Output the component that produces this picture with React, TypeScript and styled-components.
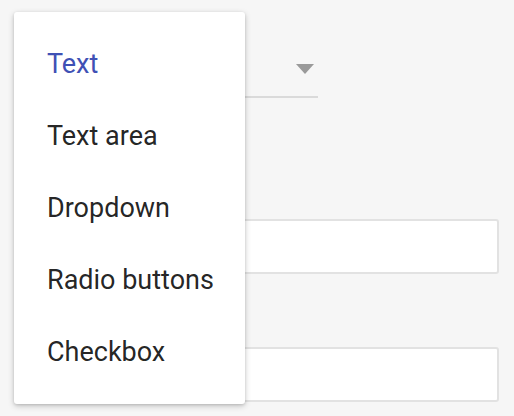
import React from "react";
import styled, { createGlobalStyle } from "styled-components";

const Global = createGlobalStyle`
  html, body {
    margin: 0;
    padding: 0;
    background: #f6f6f6;
    font-family: Roboto, "Noto Sans", "Liberation Sans", sans-serif;
  }
`;

const Page = styled.div`
  position: relative;
  width: 514px;
  height: 416px;
  overflow: hidden;
  background: #f6f6f6;
`;

const Form = styled.div`
  display: flex;
  flex-direction: column;
  padding: 0 15px 0 16px;
`;

const Select = styled.div`
  width: 302px;
  height: 98px;
  box-sizing: border-box;
  border-bottom: 2px solid #dadada;
  display: flex;
  justify-content: flex-end;
  align-items: flex-start;
  padding: 64px 4px 0 0;
`;

const Arrow = styled.div`
  width: 0;
  height: 0;
  border-left: 9.5px solid transparent;
  border-right: 9.5px solid transparent;
  border-top: 10px solid #9a9a9a;
`;

const Input = styled.div<{ $top: number }>`
  margin-top: ${(p) => p.$top}px;
  height: 55px;
  box-sizing: border-box;
  background: #ffffff;
  border: 2px solid #e2e2e2;
  border-radius: 3px;
`;

const Menu = styled.ul`
  position: absolute;
  left: 14px;
  top: 12px;
  width: 231px;
  margin: 0;
  padding: 16px 0;
  list-style: none;
  background: #ffffff;
  border-radius: 3px;
  box-shadow: 0 2px 6px rgba(0, 0, 0, 0.2), 0 1px 3px rgba(0, 0, 0, 0.12);
`;

const Item = styled.li<{ $active?: boolean }>`
  height: 72px;
  display: flex;
  align-items: center;
  padding-left: 33px;
  font-size: 27px;
  color: ${(p) => (p.$active ? "#3f51b5" : "rgba(0, 0, 0, 0.87)")};
`;

const items = ["Text", "Text area", "Dropdown", "Radio buttons", "Checkbox"];

export default function App() {
  return (
    <Page>
      <Global />
      <Form>
        <Select>
          <Arrow />
        </Select>
        <Input $top={121} />
        <Input $top={73} />
      </Form>
      <Menu>
        {items.map((t, i) => (
          <Item key={t} $active={i === 0}>
            {t}
          </Item>
        ))}
      </Menu>
    </Page>
  );
}
